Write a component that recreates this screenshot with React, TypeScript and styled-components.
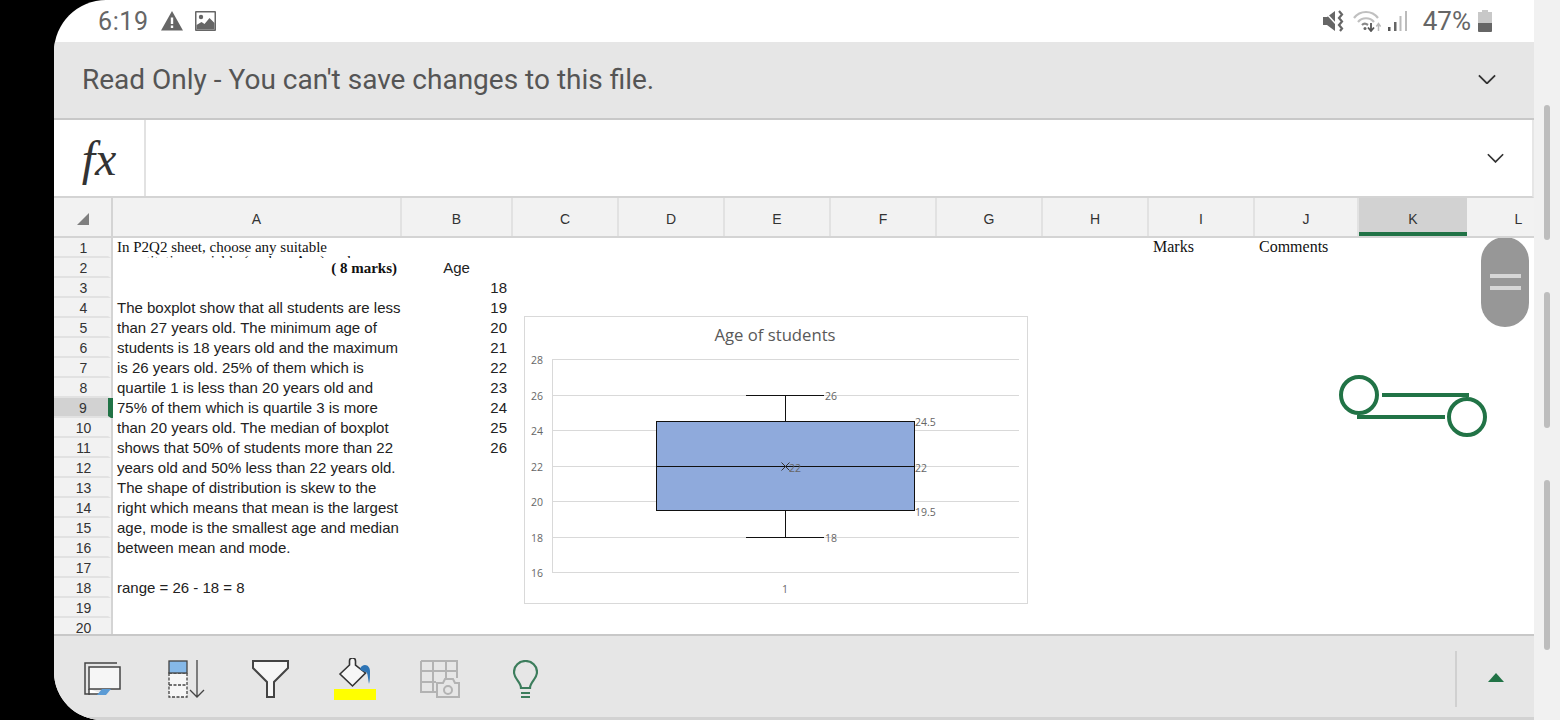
import { createGlobalStyle, styled } from "styled-components";

const GREEN = "#217346";
const COLS = "289px 111px 106px 106px 106px 106px 106px 106px 106px 104px 108px 103px";

const GlobalStyle = createGlobalStyle`
  html, body { margin: 0; padding: 0; background: #000; }
  body { width: 1560px; height: 720px; overflow: hidden; font-family: "Liberation Sans", Arial, sans-serif; }
`;

const Screen = styled.div`
  width: 1560px;
  height: 720px;
  display: grid;
  grid-template-columns: 54px 1480px 26px;
  background: #000;
`;

const Phone = styled.div`
  display: flex;
  flex-direction: column;
  height: 720px;
  background: #fff;
  border-radius: 52px 0 0 48px;
  overflow: hidden;
`;

const StatusBar = styled.div`
  height: 42px;
  flex: none;
  display: flex;
  align-items: center;
  padding: 0 42px 0 44px;
  color: #666;
  font-family: Roboto, sans-serif;
`;

const Clock = styled.span`
  font-size: 25px;
  letter-spacing: 0.6px;
`;

const StatusLeft = styled.div`
  display: flex;
  align-items: center;
  gap: 12px;
`;

const StatusRight = styled.div`
  margin-left: auto;
  display: flex;
  align-items: center;
`;

const Percent = styled.span`
  font-size: 26px;
  margin: 0 7px 0 16px;
`;

const Banner = styled.div`
  height: 76px;
  flex: none;
  box-sizing: border-box;
  height: 78px;
  padding: 0 38px 2px 28px;
  background: #e6e6e6;
  border-bottom: 2px solid #c8c8c8;
  display: flex;
  align-items: center;
  justify-content: space-between;
  font-family: Roboto, sans-serif;
  font-size: 28px;
  color: #555;
`;

const FormulaBar = styled.div`
  height: 76px;
  flex: none;
  display: flex;
  align-items: center;
  border-bottom: 2px solid #d4d4d4;
  border-right: 2px solid #e6e6e6;
  padding-right: 28px;
`;

const FxCell = styled.div`
  width: 90px;
  height: 100%;
  flex: none;
  border-right: 2px solid #e2e2e2;
  display: flex;
  align-items: center;
  justify-content: center;
  font-family: "Liberation Serif", serif;
  font-style: italic;
  font-size: 48px;
  color: #333;
`;

const FormulaInput = styled.div`
  flex: 1;
`;

const ColumnHeader = styled.div`
  height: 38px;
  flex: none;
  display: flex;
  background: #f2f2f2;
  border-bottom: 2px solid #d4d4d4;
`;

const Corner = styled.div`
  width: 35px;
  flex: none;
  border-right: 2px solid #d4d4d4;
  display: flex;
  align-items: center;
  justify-content: flex-end;
  padding: 3px 22px 0 0;
`;

const ColumnLabels = styled.div`
  flex: 1;
  min-width: 0;
  display: grid;
  grid-template-columns: ${COLS};
`;

const ColumnLabel = styled.div<{ $selected?: boolean }>`
  display: flex;
  align-items: center;
  justify-content: center;
  padding-top: 3px;
  font-size: 14px;
  color: #333;
  border-right: ${(p) => (p.$selected ? "0" : "2px solid #e2e2e2")};
  background: ${(p) => (p.$selected ? "#d2d2d2" : "transparent")};
  box-shadow: ${(p) => (p.$selected ? `inset 0 -4px 0 ${GREEN}` : "none")};
  &:last-child { border-right: 0; }
`;

const Sheet = styled.div`
  position: relative;
  height: 396px;
  flex: none;
  overflow: hidden;
`;

const Row = styled.div`
  height: 20px;
  display: flex;
`;

const RowNumber = styled.div<{ $selected?: boolean }>`
  width: 57px;
  flex: none;
  box-sizing: border-box;
  background: ${(p) => (p.$selected ? "#d2d2d2" : "#f2f2f2")};
  border-bottom: 2px solid #e2e2e2;
  border-right: 3px solid ${(p) => (p.$selected ? GREEN : "transparent")};
  display: flex;
  align-items: center;
  justify-content: center;
  font-size: 14px;
  line-height: 18px;
  color: #333;
  padding: 1px 0 0 ${(p) => (p.$selected ? 4 : 5)}px;
`;

const RowRule = styled.div<{ $selected?: boolean }>`
  width: 2px;
  flex: none;
  background: ${(p) => (p.$selected ? GREEN : "#d4d4d4")};
`;

const Cells = styled.div`
  flex: 1;
  min-width: 0;
  display: grid;
  grid-template-columns: ${COLS};
`;

const Cell = styled.div<{ $align?: string }>`
  height: 20px;
  overflow: hidden;
  padding: 0 6px 0 4px;
  font-size: 15px;
  line-height: 20px;
  text-align: ${(p) => p.$align ?? "left"};
  color: #222;
  white-space: nowrap;
`;

const SerifCell = styled(Cell)<{ $bold?: boolean; $size?: number }>`
  font-family: "Liberation Serif", serif;
  font-weight: ${(p) => (p.$bold ? 700 : 400)};
  font-size: ${(p) => p.$size ?? 15}px;
  line-height: ${(p) => (p.$size ? 18 : 20)}px;
  padding-right: 5px;
  color: #111;
`;

const ClippedCell = styled(SerifCell)`
  white-space: pre-line;
  line-height: 14px;
  padding-top: 2px;
  box-sizing: border-box;
`;

const ChartFrame = styled.div`
  position: absolute;
  left: 470px;
  top: 78px;
  width: 504px;
  height: 288px;
  box-sizing: border-box;
  border: 1px solid #d9d9d9;
  background: #fff;
`;

const Gripper = styled.div`
  position: absolute;
  right: 5px;
  top: -1px;
  width: 48px;
  height: 90px;
  border-radius: 24px;
  background: #979797;
  display: flex;
  flex-direction: column;
  align-items: center;
  justify-content: center;
  gap: 8px;
`;

const GripLine = styled.span`
  width: 31px;
  height: 4px;
  background: #d6d6d6;
`;

const Handles = styled.svg`
  position: absolute;
  left: 1284px;
  top: 135px;
`;

const Toolbar = styled.div`
  flex: 1;
  background: #e6e6e6;
  border-top: 2px solid #c8c8c8;
  border-bottom: 3px solid #d2d2d2;
  display: flex;
  align-items: center;
  padding: 4px 0 0 30px;
`;

const ToolIcons = styled.div`
  display: flex;
  align-items: center;
`;

const Tool = styled.div<{ $width: number }>`
  width: ${(p) => p.$width}px;
  height: 44px;
  display: flex;
  align-items: center;
`;

const ToolbarEnd = styled.div`
  margin-left: auto;
  width: 77px;
  height: 56px;
  border-left: 2px solid #d0d0d0;
  display: flex;
  align-items: center;
  justify-content: center;
`;

const Triangle = styled.span`
  width: 0;
  height: 0;
  margin-bottom: 2px;
  border-left: 8px solid transparent;
  border-right: 8px solid transparent;
  border-bottom: 9px solid ${GREEN};
`;

const Rail = styled.div`
  background: #f1f1f1;
  position: relative;
`;

const RailThumb = styled.div<{ $top: number; $height: number }>`
  position: absolute;
  left: 10px;
  top: ${(p) => p.$top}px;
  width: 6px;
  height: ${(p) => p.$height}px;
  border-radius: 3px;
  background: #bdbdbd;
`;

const Chevron = ({ size = 18 }: { size?: number }) => (
  <svg width={size} height={size * 0.6} viewBox="0 0 20 12" fill="none" stroke="#333" strokeWidth="2">
    <path d="M1 1.5 10 10.5 19 1.5" />
  </svg>
);

const rows: { a?: string; b?: string; bAlign?: string }[] = [
  {},
  { b: "Age", bAlign: "center" },
  { b: "18" },
  { a: "The boxplot show that all students are less", b: "19" },
  { a: "than 27 years old. The minimum age of", b: "20" },
  { a: "students is 18 years old and the maximum", b: "21" },
  { a: "is 26 years old. 25% of them which is", b: "22" },
  { a: "quartile 1 is less than 20 years old and", b: "23" },
  { a: "75% of them which is quartile 3 is more", b: "24" },
  { a: "than 20 years old. The median of boxplot", b: "25" },
  { a: "shows that 50% of students more than 22", b: "26" },
  { a: "years old and 50% less than 22 years old." },
  { a: "The shape of distribution is skew to the" },
  { a: "right which means that mean is the largest" },
  { a: "age, mode is the smallest age and median" },
  { a: "between mean and mode." },
  {},
  { a: "range = 26 - 18 = 8" },
  {},
  {},
];

const columnNames = ["A", "B", "C", "D", "E", "F", "G", "H", "I", "J", "K", "L"];
const axis = [28, 26, 24, 22, 20, 18, 16];
const yFor = (v: number) => Math.round(42 + (28 - v) * 17.75) + 0.5;

const BoxPlot = () => (
  <svg width="502" height="286" viewBox="0 0 502 286" fontFamily="'Open Sans', sans-serif" fill="#666">
    <text x="250" y="24" fontSize="16.700" textAnchor="middle" fill="#595959">Age of students</text>
    <line x1="27.500" x2="27.500" y1={yFor(28)} y2={yFor(16)} stroke="#d9d9d9" />
    {axis.map((v) => (
      <g key={v}>
        <line x1="27" x2="494" y1={yFor(v)} y2={yFor(v)} stroke="#d9d9d9" />
        <text x="12" y={yFor(v) + 4} fontSize="10.500" textAnchor="middle">{v}</text>
      </g>
    ))}
    <rect x="131.500" y={yFor(24.5)} width="258" height={yFor(19.5) - yFor(24.5)} fill="#8faadc" stroke="#111" />
    <line x1="131.500" x2="389.500" y1={yFor(22)} y2={yFor(22)} stroke="#111" />
    <line x1="260.500" x2="260.500" y1={yFor(26)} y2={yFor(24.5)} stroke="#111" />
    <line x1="260.500" x2="260.500" y1={yFor(19.5)} y2={yFor(18)} stroke="#111" />
    <line x1="221" x2="299" y1={yFor(26)} y2={yFor(26)} stroke="#111" />
    <line x1="221" x2="299" y1={yFor(18)} y2={yFor(18)} stroke="#111" />
    <path d={`M256.500 ${yFor(22) - 4}l8 8m0-8l-8 8`} stroke="#333" fill="none" />
    <text x="300" y={yFor(26) + 4} fontSize="10.500">26</text>
    <text x="390" y={yFor(24.5) + 4} fontSize="10.500">24.5</text>
    <text x="390" y={yFor(22) + 5} fontSize="10.500">22</text>
    <text x="390" y={yFor(19.5) + 5} fontSize="10.500">19.5</text>
    <text x="264" y={yFor(22) + 5} fontSize="10.500">22</text>
    <text x="300" y={yFor(18) + 4} fontSize="10.500">18</text>
    <text x="260" y="276" fontSize="10.500" textAnchor="middle">1</text>
  </svg>
);

const App = () => (
  <Screen>
    <GlobalStyle />
    <div />
    <Phone>
      <StatusBar>
        <StatusLeft>
          <Clock>6:19</Clock>
          <svg width="22" height="20" viewBox="0 0 22 20"><path d="M11 0 22 19.500H0Z" fill="#666" /><path d="M9.800 6.500h2.400v6.500H9.800zM9.800 14.500h2.400V17H9.800z" fill="#fff" /></svg>
          <svg width="21" height="20" viewBox="0 0 21 20"><rect width="21" height="20" rx="1" fill="#666" /><rect x="1.500" y="1.500" width="18" height="17" fill="#fff" /><circle cx="6" cy="6" r="2.200" fill="#666" /><path d="M1.500 18.500V14l5-3 3 2 5-6 5 5v6.500z" fill="#666" /></svg>
        </StatusLeft>
        <StatusRight>
          <svg width="21" height="22" viewBox="0 0 21 22">
            <path d="M0 7h4l8-6v20l-8-6H0z" fill="#666" />
            <path d="M1 1l12 13" stroke="#fff" strokeWidth="1.500" />
            <path d="M16 1l3 3.500-3 3.500 3 3.500-3 3.500 3 3.500-2 2.500" fill="none" stroke="#666" strokeWidth="2.200" />
          </svg>
          <svg width="28" height="22" viewBox="0 0 28 22" style={{ marginLeft: 9 }} fill="none" stroke="#c0c0c0" strokeWidth="2.200">
            <path d="M1 8c6-8 18-8 24 0M5 12c4-5 12-5 16 0" />
            <path d="M9 15c1.500-1.500 4-1.500 6 0" stroke="#888" />
            <circle cx="12" cy="18.500" r="1.500" fill="#666" stroke="none" />
            <path d="M18 13v8m-3-3.500 3 3.500 3-3.500" stroke="#555" strokeWidth="1.800" />
            <path d="M25.500 21v-7m-2.200 2.500 2.200-3 2.200 3" stroke="#bbb" strokeWidth="1.500" />
          </svg>
          <svg width="19" height="22" viewBox="0 0 19 22" style={{ marginLeft: 7 }}><rect x="0" y="17" width="2.500" height="4" fill="#555" /><rect x="6" y="12" width="2.500" height="9" fill="#666" /><rect x="11.500" y="6" width="2" height="15" fill="#bbb" /><rect x="17" y="1" width="2" height="20" fill="#bbb" /></svg>
          <Percent>47%</Percent>
          <svg width="14" height="22" viewBox="0 0 14 22"><path d="M4 0h6v2h4v11H0V2h4z" fill="#c8c8c8" /><path d="M0 13h14v8a1 1 0 0 1-1 1H1a1 1 0 0 1-1-1z" fill="#666" /></svg>
        </StatusRight>
      </StatusBar>

      <Banner>
        Read Only - You can't save changes to this file.
        <Chevron />
      </Banner>

      <FormulaBar>
        <FxCell>fx</FxCell>
        <FormulaInput />
        <Chevron size={17} />
      </FormulaBar>

      <ColumnHeader>
        <Corner>
          <svg width="12" height="12" viewBox="0 0 12 12"><path d="M12 0v12H0z" fill="#7f7f7f" /></svg>
        </Corner>
        <ColumnLabels>
          {columnNames.map((c) => (
            <ColumnLabel key={c} $selected={c === "K"}>{c}</ColumnLabel>
          ))}
        </ColumnLabels>
      </ColumnHeader>

      <Sheet>
        {rows.map((r, i) => (
          <Row key={i}>
            <RowNumber $selected={i === 8}>{i + 1}</RowNumber>
            <RowRule $selected={i === 8} />
            <Cells>
              {i === 0 && <ClippedCell>{"In P2Q2 sheet, choose any suitable\nquantitative variable (such as Age) and"}</ClippedCell>}
              {i === 1 && <SerifCell $bold $align="right">( 8 marks)</SerifCell>}
              {i > 1 && <Cell>{r.a}</Cell>}
              <Cell $align={r.bAlign ?? "right"}>{r.b}</Cell>
              <Cell /><Cell /><Cell /><Cell /><Cell /><Cell />
              <SerifCell $size={16}>{i === 0 ? "Marks" : ""}</SerifCell>
              <SerifCell $size={16}>{i === 0 ? "Comments" : ""}</SerifCell>
              <Cell /><Cell />
            </Cells>
          </Row>
        ))}

        <ChartFrame>
          <BoxPlot />
        </ChartFrame>

        <Gripper>
          <GripLine />
          <GripLine />
        </Gripper>

        <Handles width="160" height="70" viewBox="0 0 160 70" fill="none" stroke={GREEN}>
          <circle cx="21" cy="22" r="18" strokeWidth="4" />
          <circle cx="129" cy="44" r="18" strokeWidth="4" />
          <path d="M44 22h87M19 44h88" strokeWidth="4" />
        </Handles>
      </Sheet>

      <Toolbar>
        <ToolIcons>
          <Tool $width={84}>
            <svg width="37" height="33" viewBox="0 0 37 33" fill="none" stroke="#444" strokeWidth="1.500">
              <path d="M33 1H1v31h5" />
              <path d="M5 27v5h14" fill="#fff" />
              <rect x="5" y="5" width="31" height="22" fill="#f6f6f6" />
              <path d="M13 33h9l5-6h-9z" fill="#5b9bd5" stroke="none" />
            </svg>
          </Tool>
          <Tool $width={84}>
            <svg width="37" height="38" viewBox="0 0 37 38" fill="none" stroke="#444" strokeWidth="1.300">
              <rect x="1" y="13" width="18" height="24" fill="#f6f6f6" strokeDasharray="3 1.500" />
              <path d="M1 25h18" strokeDasharray="3 1.500" />
              <rect x="1" y="1" width="18" height="12" fill="#85b8e8" />
              <path d="M29 0v37m-7-7 7 7 7-7" />
            </svg>
          </Tool>
          <Tool $width={82}>
            <svg width="37" height="38" viewBox="0 0 37 38" fill="#f6f6f6" stroke="#444" strokeWidth="2">
              <path d="M1 1h35v7L22 22v15h-7V22L1 8z" />
            </svg>
          </Tool>
          <Tool $width={86}>
            <svg width="42" height="42" viewBox="0 0 42 42" fill="none">
              <path d="M6 16 15.500 7V3c0-4 6-4 6 0v4l10 8-13 13z" fill="#f6f6f6" stroke="#333" strokeWidth="1.600" />
              <path d="M26 11c1-3 3-4 5-4 3 0 5 3 5 6 0 5 0 9-1 13-1-5-1-8-2-11-1-2-5-1-7-4z" fill="#2e75b6" />
              <rect y="31" width="42" height="11" fill="#ffff00" />
            </svg>
          </Tool>
          <Tool $width={93}>
            <svg width="40" height="38" viewBox="0 0 40 38" fill="none" stroke="#b3b3b3" strokeWidth="2">
              <path d="M1 1h36v17M1 1v31h15M1 11h36M1 22h15M13 1v31M26 1v17" />
              <path d="M17 23h6l2-4h8l2 4h4v14H17z" fill="#e6e6e6" />
              <circle cx="28" cy="30" r="4" />
            </svg>
          </Tool>
          <Tool $width={26}>
            <svg width="25" height="38" viewBox="0 0 25 38" fill="none" stroke="#3c7d5c" strokeWidth="2.200">
              <path d="M8 28c0-6-7-9-7-16C1 6 6 1 12.500 1S24 6 24 12c0 7-7 10-7 16z" />
              <path d="M8 33h9M8 37h9" />
            </svg>
          </Tool>
        </ToolIcons>
        <ToolbarEnd>
          <Triangle />
        </ToolbarEnd>
      </Toolbar>
    </Phone>
    <Rail>
      <RailThumb $top={105} $height={135} />
      <RailThumb $top={292} $height={136} />
      <RailThumb $top={480} $height={170} />
    </Rail>
  </Screen>
);

export default App;
